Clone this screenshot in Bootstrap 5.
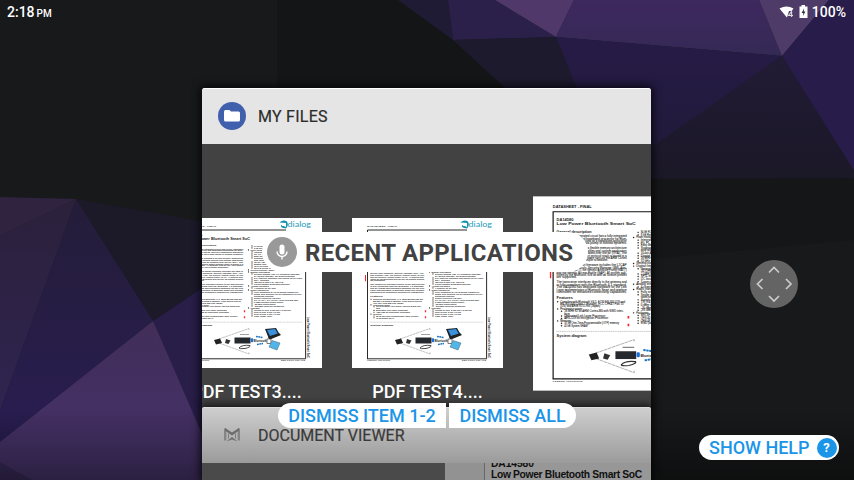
<!DOCTYPE html>
<html lang="en">
<head>
<meta charset="utf-8">
<meta name="viewport" content="width=device-width, initial-scale=1">
<title>Recent applications</title>
<link href="https://cdn.jsdelivr.net/npm/bootstrap@5.3.0/dist/css/bootstrap.min.css" rel="stylesheet">
<style>
body{width:854px;height:480px;overflow:hidden;background:#151617;font-family:Roboto,sans-serif;line-height:1}
.stage{width:854px;height:480px}
.stage svg{display:block;flex-shrink:0}
.statusbar{height:24px;padding:0 8px 0 7px;font-size:14px;font-weight:500;color:#fff}
.statusbar .ampm{font-size:10px;margin-left:2px;padding-top:3px}
.wifi{margin-right:4px}
.battery{margin-right:4px}
.recents{width:449px;margin:64px 0 0 202px;height:392px}
.app{box-shadow:0 0 9px 2px rgba(0,0,0,.75);border-radius:2px 2px 0 0}
.app-files{height:319px;background:#424242}
.app-head{height:56px;padding:0 0 1px 16px;gap:12px;font-size:16px;color:#2c2c2c;border-radius:2px 2px 0 0}
.app-head span{margin-top:1px;-webkit-text-stroke:.2px}
.app-files .app-head{background:#e5e5e5;border-top:1px solid #fff}
.app-files .app-head span{letter-spacing:.25px}
.app-viewer{height:73px;background:#4a4a4a}
.app-viewer .app-head{background:linear-gradient(#cecece,#9b9b9b);border-top:1px solid #ddd;color:#3a3a3a}
.thumbs{height:263px;margin-left:-31px;gap:30px;width:520px}
.thumb-item{width:151px;padding-top:74px}
.thumb-item.focused{width:195px;padding-top:52px}
.thumb-name{font-size:18px;font-weight:500;color:#fff;margin:15px 0 0 0;white-space:nowrap}
.doc-page{width:206px;height:17px;background:#929292;padding-left:39px}
.doc-inner{background:#979797;border-left:1px solid #666;width:167px;padding-left:6px}
.doc-inner div{font:bold 10.3px/12px "Liberation Sans",sans-serif;letter-spacing:-.34px;color:#111;white-space:nowrap}
.doc-inner .model{margin-top:-5px;line-height:11px;letter-spacing:-.1px}
.pill{background:#fff;white-space:nowrap}
.speech{left:262px;top:232px;width:326px;height:40px;padding-left:5px;gap:8px;font-size:24px;font-weight:700;color:#424242;letter-spacing:.31px}
.speech span{padding-top:2px}
.actions{left:278px;top:403px;gap:3px}
.actions .pill,.help{height:25px;font-size:18px;font-weight:500;color:#1b95e8;border:0;padding:0}
.dismiss-one{width:168px;border-radius:13px 0 0 13px}
.dismiss-all{width:127px;border-radius:0 13px 13px 0}
.help{left:699px;top:435px;width:140px;gap:7px;padding-left:10px!important}
.help-mark{width:20px;height:20px;background:#1b95e8;color:#fff;font-size:13px;font-weight:700}
.pad{left:750px;top:260px}
.dim{left:0;top:410px;width:854px;height:70px;background:linear-gradient(transparent,rgba(0,0,0,.42));pointer-events:none}
</style>
<script src="https://cdn.jsdelivr.net/npm/bootstrap@5.3.0/dist/js/bootstrap.bundle.min.js"></script>
</head>
<body>
<main class="stage position-relative overflow-hidden">
<svg class="wallpaper position-absolute top-0 start-0" width="854" height="480" viewBox="0 0 854 480">
 <defs>
  <linearGradient id="g1" x1="0" y1="0" x2="0" y2="1"><stop offset="0" stop-color="#2b213b"/><stop offset="1" stop-color="#2f2450"/></linearGradient>
  <linearGradient id="g2" x1="0" y1="0" x2="0" y2="1"><stop offset="0" stop-color="#241d38"/><stop offset="1" stop-color="#291d52"/></linearGradient>
  <linearGradient id="g3" x1="0" y1="0" x2="0" y2="1"><stop offset="0" stop-color="#422e58"/><stop offset=".6" stop-color="#443064"/><stop offset="1" stop-color="#4a3670"/></linearGradient>
  <linearGradient id="g4" x1="0" y1="0" x2="0" y2="1"><stop offset="0" stop-color="#3e285f"/><stop offset="1" stop-color="#342955"/></linearGradient>
  <linearGradient id="g5" x1="0" y1="0" x2="0" y2="1"><stop offset="0" stop-color="#261b46"/><stop offset="1" stop-color="#211a3a"/></linearGradient>
  <linearGradient id="g6" x1="0" y1="0" x2="0" y2="1"><stop offset="0" stop-color="#211b35"/><stop offset="1" stop-color="#1b1827"/></linearGradient>
 </defs>
 <rect width="854" height="480" fill="#18191a"/>
 <path d="M277 0H398L453 40L520 100V480H277Z" fill="#141516"/>
 <path d="M76 199L210 223V290L153 321Z" fill="#1c1929"/>
 <path d="M0 197L76 199L0 236Z" fill="#30233f"/>
 <path d="M0 236L76 199L0 411Z" fill="url(#g1)"/>
 <path d="M76 199L153 321L0 442V411Z" fill="url(#g2)"/>
 <path d="M153 321L210 283V460Z" fill="#281e48"/>
 <path d="M153 321L0 442V480H222Z" fill="url(#g3)"/>
 <path d="M0 462L32 480H0Z" fill="#3b2c5c"/>
 <path d="M398 0H448L453 40Z" fill="#201b35"/>
 <path d="M448 0H495L556 37L453 40Z" fill="#2b2049"/>
 <path d="M495 0H574L556 37Z" fill="#50396a"/>
 <path d="M574 0H759L782 56L556 37Z" fill="url(#g4)"/>
 <path d="M759 0H829L782 56Z" fill="#4f3b68"/>
 <path d="M829 0H854V171L782 56Z" fill="#271c4a"/>
 <path d="M453 40L556 37L590 120L540 120Z" fill="#1e1a2e"/>
 <path d="M556 37L782 56L640 156L590 120Z" fill="url(#g5)"/>
 <path d="M782 56L854 171V178L640 179V155Z" fill="url(#g6)"/>
 <path d="M640 179L854 178V240L640 260Z" fill="#151617"/>
</svg>
<div class="dim position-absolute"></div>

<header class="statusbar position-relative d-flex align-items-center">
 <span>2:18</span><span class="ampm">PM</span>
 <svg class="wifi ms-auto" width="16" height="14" viewBox="0 0 16 14"><path d="M.5 3.500Q7.500-.5 14.500 3.500L12.500 6L10 6L8 12.500L7.500 12Z" fill="#fff"/><path d="M12.600 12V6.500L9.500 10.500H14" stroke="#ddd" stroke-width="1.100" fill="none"/></svg>
 <svg class="battery" width="9" height="14" viewBox="0 0 9 14"><path d="M2.500 0H6V1.500H8.500V13H.5V1.500H2.500Z" fill="#fff"/><path d="M5.200 3.200L2.600 8H4.300L3.900 11L6.500 6.400H4.800Z" fill="#333"/></svg>
 <span>100%</span>
</header>

<section class="recents position-relative d-flex flex-column">
 <article class="app app-files overflow-hidden">
  <div class="app-head d-flex align-items-center">
   <svg width="28" height="28" viewBox="0 0 28 28"><circle cx="14" cy="14" r="14" fill="#405fac"/><path d="M6 10Q6 8 7.500 8H11.500L13 9.500H20.500Q22 9.500 22 11V18Q22 19.500 20.500 19.500H7.500Q6 19.500 6 18Z" fill="#fff"/></svg>
   <span>MY FILES</span>
  </div>
  <div class="thumbs d-flex">
   <div class="thumb-item d-flex flex-column align-items-center flex-shrink-0"><svg width="151" height="150" viewBox="0 0 151 150"><use href="#page"/></svg><div class="thumb-name">PDF TEST3....</div></div>
   <div class="thumb-item d-flex flex-column align-items-center flex-shrink-0"><svg width="151" height="150" viewBox="0 0 151 150"><use href="#page"/></svg><div class="thumb-name">PDF TEST4....</div></div>
   <div class="thumb-item focused flex-shrink-0"><svg width="196" height="195" viewBox="0 0 151 150"><use href="#page"/></svg></div>
  </div>
 </article>
 <article class="app app-viewer position-relative">
  <div class="app-head d-flex align-items-center">
   <svg width="28" height="28" viewBox="0 0 28 28"><path d="M7.200 7.500V19.500M20.800 7.500V19.500" stroke="#858585" stroke-width="2.400"/><path d="M7 7L14 11.500L21 7V9.500L14 14.500L7 9.500Z" fill="#6c6c6c"/><path d="M8.500 20.500L14 16L19.500 20.500L14 18.600Z" fill="#707070"/><path d="M10.500 12.500V17.500M17.500 12.500V17.500" stroke="#7c7c7c" stroke-width="1"/></svg>
   <span>DOCUMENT VIEWER</span>
  </div>
  <div class="doc-page ms-auto overflow-hidden"><div class="doc-inner"><div class="model">DA14580</div><div>Low Power Bluetooth Smart SoC</div></div></div>
 </article>
</section>

<div class="speech pill position-absolute rounded-pill d-flex align-items-center">
 <svg width="30" height="30" viewBox="0 0 30 30"><circle cx="15" cy="15" r="15" fill="#999"/><rect x="12.500" y="7.500" width="5" height="10" rx="2.500" fill="#fff"/><path d="M10 14.500A5 5 0 0 0 20 14.500M15 19.500V22.500" stroke="#fff" stroke-width="1.400" fill="none"/></svg>
 <span>RECENT APPLICATIONS</span>
</div>

<div class="actions position-absolute d-flex">
 <button class="pill dismiss-one">DISMISS ITEM 1-2</button>
 <button class="pill dismiss-all">DISMISS ALL</button>
</div>

<svg class="pad position-absolute" width="48" height="48" viewBox="0 0 48 48"><circle cx="24" cy="24" r="24" fill="#636463"/><path d="M19 12.500L24 7.500L29 12.500M19 36L24 41L29 36M12.500 19L7.500 24L12.500 29M36 19L41 24L36 29" stroke="#ccc" stroke-width="1.700" fill="none"/></svg>

<button class="help pill position-absolute rounded-pill d-flex align-items-center"><span>SHOW HELP</span><span class="help-mark rounded-circle d-flex align-items-center justify-content-center">?</span></button>

<svg class="position-absolute" width="0" height="0">
 <symbol id="page" viewBox="0 0 151 150">
  <rect width="151" height="150" fill="#fff"/>
  <g font-family="Liberation Sans, sans-serif" font-weight="700" fill="#222">
   <text x="15.300" y="9.400" font-size="2.300" textLength="30" lengthAdjust="spacingAndGlyphs">DATASHEET - FINAL</text>
   <text x="18.200" y="18.900" font-size="3.200" textLength="13" lengthAdjust="spacingAndGlyphs">DA14580</text>
   <text x="18.200" y="22.200" font-size="3.200" textLength="61" lengthAdjust="spacingAndGlyphs">Low Power Bluetooth Smart SoC</text>
   <text x="18.200" y="28.400" font-size="2.500" textLength="27" lengthAdjust="spacingAndGlyphs">General description</text>
   <text x="18.200" y="79.300" font-size="2.500" textLength="12.500" lengthAdjust="spacingAndGlyphs">Features</text>
   <text x="18.200" y="108.300" font-size="2.500" textLength="23" lengthAdjust="spacingAndGlyphs">System diagram</text>
   <text transform="translate(136 99) rotate(90)" font-size="2.800" textLength="41" lengthAdjust="spacingAndGlyphs">Low Power Bluetooth Smart SoC</text>
   <text x="15.300" y="142.900" font-size="1.700" textLength="23">Company confidential</text>
   <text x="110" y="142.900" font-size="1.700" textLength="24">www.dialog-semi.com</text>
  </g>
  <g id="copy" font-family="Liberation Sans, sans-serif" font-size="2.050" fill="#222" stroke="#444" stroke-width=".05"></g>
  <path d="M15.500 140.800V12H115M134.600 26V140.800H15" stroke="#111" stroke-width=".9" fill="none"/>
  <path d="M18 104.200H131" stroke="#aaa" stroke-width=".5" stroke-dasharray="1 .4"/>
  <path d="M13.500 57V63.300" stroke="#f22" stroke-width="1"/>
  <path d="M73.500 92.300V94.300M73.500 98.300V100.300" stroke="#f22" stroke-width="1.300"/>
  <path d="M108.500 4.500Q112 1 116 3.500Q118 7 115 10.500Q109 10 110 7L115 9V5Z" fill="#1391ad"/><circle cx="112.200" cy="6.500" r="1.500" fill="#fff"/>
  <text x="116.500" y="8.800" font-family="Lato, sans-serif" font-size="7" fill="#1f9bb8" textLength="23.500" lengthAdjust="spacingAndGlyphs">dialog</text>
  <path d="M48 121L78 110.500V112M48 125L78 136V134" stroke="#999" stroke-width=".6" fill="none" stroke-dasharray="3 .4"/>
  <path d="M43 122L49 120.500L51 125L45 126.500Z" fill="#222"/><path d="M55 121L59.500 122.500L57.500 126L54 125Z" fill="#333"/>
  <rect x="63.500" y="119.500" width="16" height="6" fill="#25282c"/><path d="M69 116.500H78" stroke="#888" stroke-width=".8"/>
  <path d="M68 130Q71 126.500 79 127.500Q80 129 74 130.500Q68 131 68 130Z" fill="none" stroke="#333" stroke-width=".9"/>
  <rect x="79.800" y="120.200" width="2.500" height="4" rx="1" fill="#1770db"/>
  <text x="82.800" y="123.700" font-family="Liberation Sans, sans-serif" font-size="3.200" font-weight="700" fill="#222" textLength="13" lengthAdjust="spacingAndGlyphs">Bluetooth</text>
  <path d="M85 118.500L92 119.500M86 126.500L92 125.500" stroke="#1770bd" stroke-width="1.500" stroke-dasharray="1.800 .5"/>
  <path d="M94 111L105 110L109 117L98 121Z" fill="#18242e"/><path d="M96 112L104 111L107 116L99 118Z" fill="#3b91dc"/><path d="M97 119L108 115L110 117L99 121.500Z" fill="#222"/>
  <rect x="96" y="121" width="4" height="4.500" fill="#fff" stroke="#222" stroke-width=".6"/>
  <path d="M101 122.500L109 125L106 132L98 129Z" fill="#52b5e8" stroke="#45606d" stroke-width=".5"/>
 </symbol>
</svg>
</main>
<script>
// Fills the datasheet page with its two columns of body copy
const left = [
 "The DA14580 integrated circuit has a fully integrated","radio transceiver and baseband processor for Blue-","tooth Smart. It can be used as a standalone application","processor or as a data pump in hosted systems.","",
 "The DA14580 supports a flexible memory architecture","for storing Bluetooth profiles and custom application","code, which can be updated over the air (OTA). The","qualified Bluetooth Smart protocol stack is stored in a","dedicated ROM. All software runs on the ARM Cortex","M0 processor via a simple scheduler.","",
 "The Bluetooth Smart firmware includes the L2CAP","service layer protocols, Security Manager (SM), Attri-","bute Protocol (ATT), the Generic Attribute Profile (GATT)","and the Generic Access Profile (GAP). All profiles pub-","lished by the Bluetooth SIG as well as custom profiles","are supported.","",
 "The transceiver interfaces directly to the antenna and","is fully compliant with the Bluetooth 4.1 standard.","The DA14580 has dedicated hardware for the Link",
 "Layer implementation of Bluetooth Smart and interface","controllers for enhanced connectivity capabilities."];
const features = ["Complies with Bluetooth V4.1, ETSI EN 300 328 and","EN 300 440 Class 2 (Europe), FCC CFR47 Part 15","(US) and ARIB STD-T66 (Japan)","Processing power","16 MHz 32 bit ARM Cortex-M0 with SWD inter-","face","Dedicated Link Layer Processor","AES-128 bit encryption Processor","Memories","32 kB One-Time-Programmable (OTP) memory","42 kB System SRAM"];
const right = ["84 kB ROM","8 kB Retention SRAM","Power management","Integrated Buck/Boost","P0, P1, P2 and P3","Easy decoupling","Supports coin (typ. 3.0 V)","and alkaline (typ. 1.5 V)","10-bit ADC for battery","Digital controlled oscillators","16 MHz crystal (20 ppm max)","32 kHz crystal (500 ppm max)","General purpose, Capture and","Digital interfaces","General purpose I/Os: 14 (WLCSP34 package),","24 (QFN40 package), 32 (QFN48 package)","2 UARTs with hardware flow control up to 1 Mb/s","SPI+ interface","I2C bus at 100 kHz, 400 kHz","3-axes capable Quadrature Decoder","Analog interfaces","4-channel 10-bit ADC","Radio transceiver","Fully integrated 2.4 GHz CMOS transceiver","Single wire antenna: no RF matching or RX/TX","switching required","Supply current at VBAT3V:","TX: 3.4 mA, RX: 3.7 mA (with ideal DC-DC)","0 dBm transmit output power","-20 dBm output power","-93 dBm receiver sensitivity","Packages:","WLCSP 34 pins, 2.436 mm x 2.436 mm","QFN 40 pins, 5 mm x 5 mm","QFN 48 pins, 6 mm x 6 mm","KGD (wafer, dice)"];
const NS = "http://www.w3.org/2000/svg";
const copy = document.getElementById("copy");
function line(x, y, w, s, dot){
 if(!s) return;
 const t = document.createElementNS(NS, "text");
 t.setAttribute("x", x); t.setAttribute("y", y);
 t.setAttribute("textLength", w); t.setAttribute("lengthAdjust", "spacingAndGlyphs");
 t.textContent = s; copy.appendChild(t);
 if(dot){
  const c = document.createElementNS(NS, "circle");
  c.setAttribute("cx", x-2); c.setAttribute("cy", y-.7); c.setAttribute("r", .55); c.setAttribute("fill", "#222");
  copy.appendChild(c);
 }
}
left.forEach((s,i)=>line(18.200, 31.600+i*1.870, s.length>44?54:s.length*1.1, s));
features.forEach((s,i)=>line([0,1,2,3,8].includes(i)?21:24, 82+i*1.850, Math.min(s.length*1.060,50), s, ![1,2,5].includes(i)));
right.forEach((s,i)=>line([2,12,13,20,22,31].includes(i)?79.500:83, 28.600+i*2, Math.min(s.length*1.080,48), s, ![7,15,25].includes(i)));
</script>
</body>
</html>
